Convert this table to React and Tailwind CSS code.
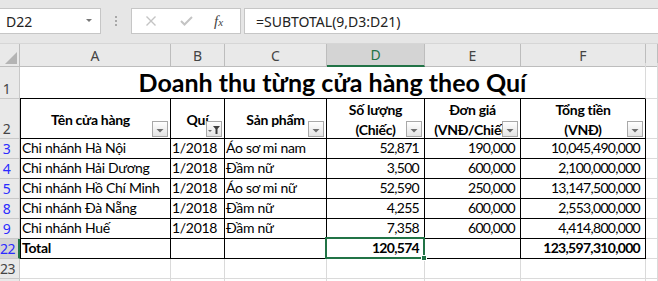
import React from "react";

const GRID = "grid grid-cols-[20px_151px_54px_102px_98px_96px_125px_1fr]";

const rows = [
  { n: 3, a: "Chi nhánh Hà Nội", b: "1/2018", c: "Áo sơ mi nam", d: "52,871", e: "190,000", f: "10,045,490,000" },
  { n: 4, a: "Chi nhánh Hải Dương", b: "1/2018", c: "Đầm nữ", d: "3,500", e: "600,000", f: "2,100,000,000" },
  { n: 5, a: "Chi nhánh Hồ Chí Minh", b: "1/2018", c: "Áo sơ mi nữ", d: "52,590", e: "250,000", f: "13,147,500,000" },
  { n: 8, a: "Chi nhánh Đà Nẵng", b: "1/2018", c: "Đầm nữ", d: "4,255", e: "600,000", f: "2,553,000,000" },
  { n: 9, a: "Chi nhánh Huế", b: "1/2018", c: "Đầm nữ", d: "7,358", e: "600,000", f: "4,414,800,000" },
];

const FilterButton = ({ active }) => (
  <div className="absolute right-[2px] bottom-[1px] z-10 w-[16px] h-[16px] border border-[#a9a9a9] bg-gradient-to-b from-white to-[#e4e4e4] flex items-center justify-center">
    {active ? (
      <svg width="14" height="14" viewBox="0 0 14 14">
        <polygon points="1,8 5,8 3,10" fill="#6a6a6a" />
        <polygon points="6,4 13,4 10.5,7 10.5,12 8.5,12 8.5,7" fill="#404040" />
      </svg>
    ) : (
      <svg width="14" height="14" viewBox="0 0 14 14">
        <polygon points="3.5,7 10.5,7 7,10.5" fill="#6f6f6f" />
      </svg>
    )}
  </div>
);

const RowHead = ({ n, blue, sel }) => (
  <div
    className={
      sel
        ? "flex items-end border-b border-[#c8c8c8] border-r-2 border-r-[#217346] bg-[#d4d4d4] pb-[1px]"
        : "flex items-end border-b border-r border-[#c8c8c8] bg-[#e9e9e9] pb-[1px]"
    }
  >
    <span
      className={
        blue
          ? "w-[13px] text-center font-['Noto_Sans',sans-serif] text-[14px] tracking-[-0.5px] leading-[17px] text-[#2b2bff]"
          : "w-[13px] text-center font-['Noto_Sans',sans-serif] text-[14px] tracking-[-0.5px] leading-[17px] text-[#444]"
      }
    >
      {n}
    </span>
  </div>
);

const Cell = ({ children, right, bold, first }) => (
  <div
    className={
      (first ? "border-l border-l-black " : "") +
      "flex items-end overflow-hidden whitespace-nowrap border-r border-b border-black pb-[1px] text-[14px] leading-[18px] text-black " +
      (right ? "justify-end pr-[5px] tracking-[-0.7px] " : "pl-[1px] tracking-[-0.3px] ") +
      (bold ? "font-bold" : "")
    }
  >
    {children}
  </div>
);

const GridCell = () => <div className="border-r border-b border-[#dadada]" />;

const HeadCell = ({ children, active, first }) => (
  <div
    className={
      (first ? "border-l border-l-black pr-[10px] " : "") +
      "relative flex items-center justify-center overflow-hidden border-r border-b border-black pt-[2px] text-center text-[14px] font-bold leading-[20px] tracking-[-0.3px] text-black"
    }
  >
    <span className="whitespace-nowrap">{children}</span>
    <FilterButton active={active} />
  </div>
);

const ColHead = ({ label, sel }) => (
  <div
    className={
      sel
        ? "flex items-center justify-center border-r border-[#bdbdbd] border-b-2 border-b-[#217346] bg-[#d4d4d4] text-[14px] text-[#217346]"
        : "flex items-center justify-center border-r border-b border-[#bdbdbd] bg-[#e9e9e9] text-[14px] text-[#444]"
    }
  >
    {label}
  </div>
);

const EmptyRow = ({ n }) => (
  <div className={GRID + " h-[20px]"}>
    <RowHead n={n} />
    <GridCell />
    <GridCell />
    <GridCell />
    <GridCell />
    <GridCell />
    <GridCell />
    <GridCell />
  </div>
);

export default function App() {
  return (
    <div className="w-[658px] h-[281px] overflow-hidden bg-white font-['Noto_Sans',sans-serif]">
      {/* formula bar */}
      <div className="h-[44px] bg-[#e6e6e6] flex items-start pt-[8px] border-b border-[#d6d6d6]">
        <div className="w-[101px] h-[26px] bg-white border border-[#c6c6c6] border-l-0 flex items-center justify-between pl-[6px] pr-[8px]">
          <span className="text-[14px] text-[#222]">D22</span>
          <svg width="6" height="4" viewBox="0 0 6 4">
            <polygon points="0,0 6,0 3,3" fill="#777" />
          </svg>
        </div>
        <div className="w-[30px] h-[26px] flex flex-col items-center justify-center gap-[2px]">
          <span className="w-[2px] h-[2px] bg-[#a8a8a8]" />
          <span className="w-[2px] h-[2px] bg-[#a8a8a8]" />
          <span className="w-[2px] h-[2px] bg-[#a8a8a8]" />
        </div>
        <div className="w-[110px] h-[26px] bg-white border border-[#c6c6c6] flex items-center">
          <svg className="ml-[13px]" width="12" height="12" viewBox="0 0 12 12">
            <path d="M1.5 1.5 L10.5 10.5 M10.5 1.5 L1.5 10.5" stroke="#c4c4c4" strokeWidth="1.4" />
          </svg>
          <svg className="ml-[23px]" width="13" height="12" viewBox="0 0 13 12">
            <path d="M1 6 L4.5 9.5 L12 2" stroke="#c4c4c4" strokeWidth="2" fill="none" />
          </svg>
          <span className="ml-[21px] font-['Liberation_Serif',serif] italic text-[15px] text-[#444] leading-none">
            f<span className="text-[11px]">x</span>
          </span>
        </div>
        <div className="ml-[3px] flex-1 h-[26px] bg-white border border-[#c6c6c6] border-r-0 flex items-center pl-[11px]">
          <span className="text-[14px] text-[#222]">=SUBTOTAL(9,D3:D21)</span>
        </div>
      </div>

      {/* column headers */}
      <div className={GRID + " h-[19px]"}>
        <div className="relative border-r border-b border-[#bdbdbd] bg-[#e9e9e9]">
          <svg className="absolute right-[2px] bottom-[2px]" width="12" height="12" viewBox="0 0 12 12">
            <polygon points="12,0 12,12 0,12" fill="#b4b4b4" />
          </svg>
        </div>
        <ColHead label="A" />
        <ColHead label="B" />
        <ColHead label="C" />
        <ColHead label="D" sel />
        <ColHead label="E" />
        <ColHead label="F" />
        <ColHead label="" />
      </div>

      <div className="font-['Lato','Noto_Sans',sans-serif]">
        {/* row 1: title */}
        <div className={GRID + " h-[36px]"}>
          <RowHead n={1} />
          <div className="col-span-6 flex items-end justify-center border-r border-r-[#dadada] border-b border-b-black">
            <span className="text-[25px] font-bold leading-[32px] text-black">Doanh thu từng cửa hàng theo Quí</span>
          </div>
          <GridCell />
        </div>

        {/* row 2: headers */}
        <div className={GRID + " h-[40px]"}>
          <RowHead n={2} />
          <HeadCell first>Tên cửa hàng</HeadCell>
          <HeadCell active>Quí</HeadCell>
          <HeadCell>Sản phẩm</HeadCell>
          <HeadCell>
            Số lượng
            <br />
            (Chiếc)
          </HeadCell>
          <HeadCell>
            Đơn giá
            <br />
            (VNĐ/Chiếc)
          </HeadCell>
          <HeadCell>
            Tổng tiền
            <br />
            (VNĐ)
          </HeadCell>
          <GridCell />
        </div>

        {rows.map((r) => (
          <div key={r.n} className={GRID + " h-[20px]"}>
            <RowHead n={r.n} blue />
            <Cell first>{r.a}</Cell>
            <Cell>{r.b}</Cell>
            <Cell>{r.c}</Cell>
            <Cell right>{r.d}</Cell>
            <Cell right>{r.e}</Cell>
            <Cell right>{r.f}</Cell>
            <GridCell />
          </div>
        ))}

        {/* total row */}
        <div className={GRID + " h-[20px]"}>
          <RowHead n={22} blue sel />
          <Cell first bold>Total</Cell>
          <Cell />
          <Cell />
          <div className="relative flex items-end justify-end border-r border-b border-black pb-[1px] pr-[5px] text-[14px] font-bold leading-[18px] tracking-[-0.7px] text-black">
            120,574
            <div className="absolute -left-[2px] -top-[2px] -right-[1px] -bottom-[1px] border-2 border-[#217346]" />
            <div className="absolute -right-[3px] -bottom-[3px] w-[6px] h-[6px] bg-[#217346] border border-white" />
          </div>
          <Cell />
          <Cell right bold>123,597,310,000</Cell>
          <GridCell />
        </div>

        <EmptyRow n={23} />
        <EmptyRow n="" />
      </div>
    </div>
  );
}
